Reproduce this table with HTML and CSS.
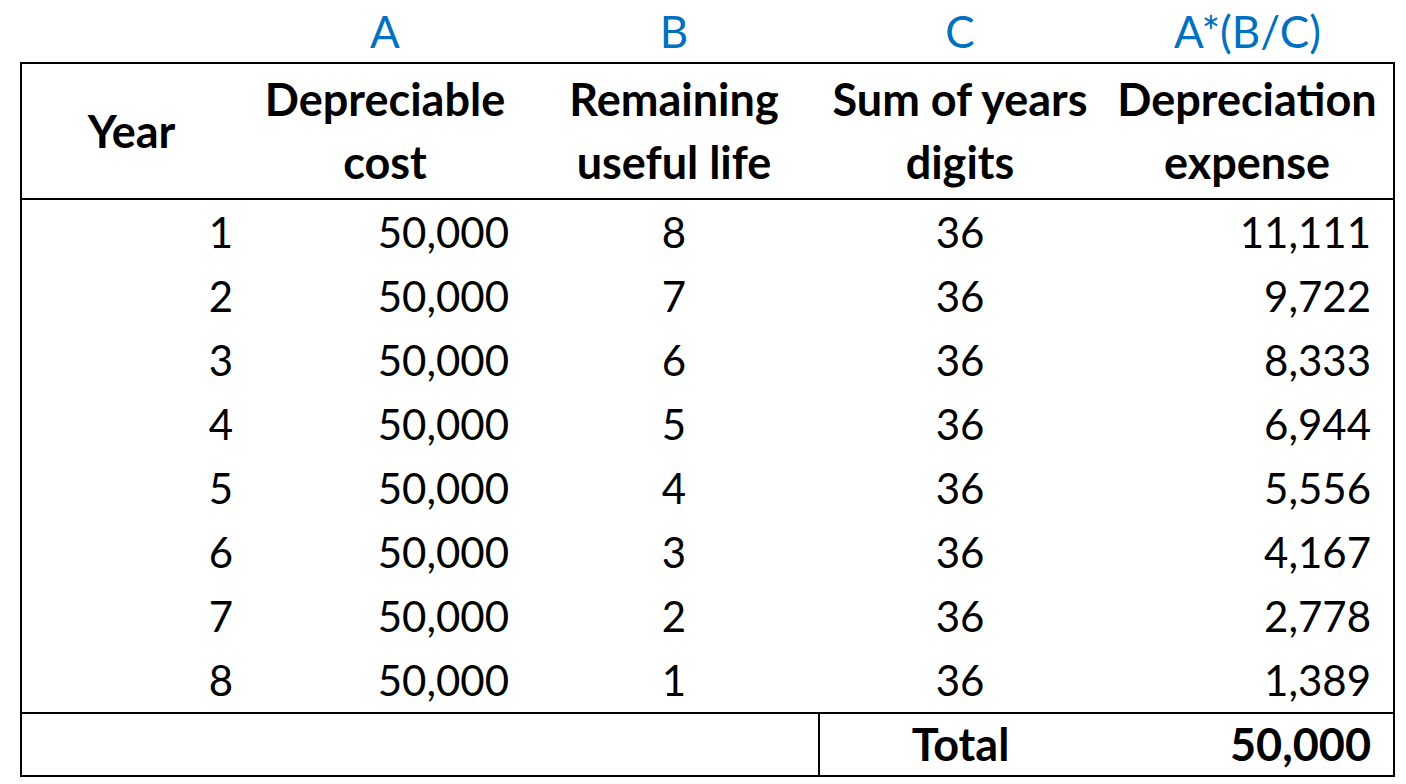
FILE: index.html
```html
<!DOCTYPE html>
<html lang="en">
<head>
<meta charset="utf-8">
<title>Sum of years digits depreciation</title>
<link rel="stylesheet" href="styles.css">
</head>
<body>
<div class="page">
  <table class="dep">
    <colgroup>
      <col class="c1"><col class="c2"><col class="c3"><col class="c4"><col class="c5">
    </colgroup>
    <tr class="letters">
      <td></td><td>A</td><td>B</td><td>C</td><td>A*(B/C)</td>
    </tr>
    <tr class="head">
      <th>Year</th>
      <th>Depreciable<br>cost</th>
      <th>Remaining<br>useful life</th>
      <th>Sum of years<br>digits</th>
      <th>Depreciation<br>expense</th>
    </tr>
    <tr class="row first"><td class="yr">1</td><td class="cost">50,000</td><td class="ctr">8</td><td class="ctr">36</td><td class="exp">11,111</td></tr>
    <tr class="row"><td class="yr">2</td><td class="cost">50,000</td><td class="ctr">7</td><td class="ctr">36</td><td class="exp">9,722</td></tr>
    <tr class="row"><td class="yr">3</td><td class="cost">50,000</td><td class="ctr">6</td><td class="ctr">36</td><td class="exp">8,333</td></tr>
    <tr class="row"><td class="yr">4</td><td class="cost">50,000</td><td class="ctr">5</td><td class="ctr">36</td><td class="exp">6,944</td></tr>
    <tr class="row"><td class="yr">5</td><td class="cost">50,000</td><td class="ctr">4</td><td class="ctr">36</td><td class="exp">5,556</td></tr>
    <tr class="row"><td class="yr">6</td><td class="cost">50,000</td><td class="ctr">3</td><td class="ctr">36</td><td class="exp">4,167</td></tr>
    <tr class="row"><td class="yr">7</td><td class="cost">50,000</td><td class="ctr">2</td><td class="ctr">36</td><td class="exp">2,778</td></tr>
    <tr class="row last"><td class="yr">8</td><td class="cost">50,000</td><td class="ctr">1</td><td class="ctr">36</td><td class="exp">1,389</td></tr>
    <tr class="total">
      <td colspan="3" class="blank"></td>
      <td class="ctr tlabel">Total</td>
      <td class="exp tval">50,000</td>
    </tr>
  </table>
</div>
</body>
</html>
```

FILE: styles.css
```css
html, body {
  margin: 0;
  padding: 0;
  background: #ffffff;
}

.page {
  padding: 0 0 0 20px;
  font-family: "Lato", "Open Sans", sans-serif;
  color: #000000;
}

.dep {
  border-collapse: collapse;
  table-layout: fixed;
  width: 1373px;
  font-size: 42px;
}

.c1 { width: 220px; }
.c2 { width: 288px; }
.c3 { width: 290px; }
.c4 { width: 282px; }
.c5 { width: 293px; }

.dep td, .dep th {
  padding: 0;
  white-space: nowrap;
}

.letters td {
  height: 62px;
  text-align: center;
  color: #0070c0;
  font-size: 44px;
  font-weight: 400;
  vertical-align: middle;
  line-height: 62px;
}

.head th {
  height: 134px;
  font-size: 45px;
  font-weight: 700;
  text-align: center;
  vertical-align: middle;
  line-height: 63px;
  border-top: 2px solid #000;
  border-bottom: 2px solid #000;
}

.head th:first-child { border-left: 2px solid #000; }
.head th:last-child { border-right: 2px solid #000; }

.row td {
  height: 64px;
  line-height: 64px;
  vertical-align: middle;
}

.row td:first-child { border-left: 2px solid #000; }
.row td:last-child { border-right: 2px solid #000; }
.row.first td { height: 63px; }
.row.last td { height: 63px; }

.yr { text-align: right; padding-right: 8px !important; }
.cost { text-align: right; padding-right: 20px !important; }
.ctr { text-align: center; }
.exp { text-align: right; padding-right: 22px !important; }

.total td {
  height: 61px;
  line-height: 61px;
  border-top: 2px solid #000;
  border-bottom: 2px solid #000;
  font-size: 45px;
  font-weight: 700;
}

.total .blank {
  border-left: 2px solid #000;
  border-right: 2px solid #000;
}

.total .tval { border-right: 2px solid #000; }
```
